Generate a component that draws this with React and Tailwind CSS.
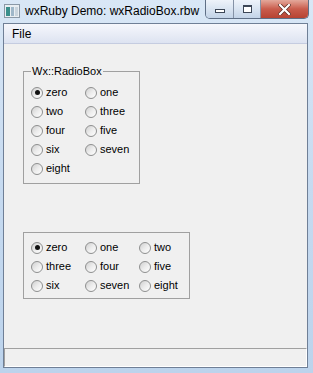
const Radio = ({ label, checked }) => {
  return (
    <div className="flex h-[19px] items-center">
      <span className="flex h-[12px] w-[12px] shrink-0 items-center justify-center rounded-full border border-[#8e8f8f] bg-gradient-to-br from-[#cfcfcf] via-[#ececec] to-[#ffffff]">
        {checked && <span className="h-[5px] w-[5px] rounded-full bg-[#111]" />}
      </span>
      <span className="ml-[3px] text-[11px] leading-none text-black">{label}</span>
    </div>
  );
};

const AppIcon = () => (
  <svg width="16" height="14" viewBox="0 0 16 14" className="shrink-0">
    <rect x="0.5" y="0.5" width="15" height="13" fill="#e9eef2" stroke="#8a98a6" />
    <rect x="2" y="3" width="4" height="9" fill="#3a8f8c" />
    <rect x="7" y="3" width="3" height="9" fill="#9fb7c9" />
    <rect x="11" y="3" width="3" height="9" fill="#c9d4dd" />
  </svg>
);

export default function App() {
  const first = ["zero", "one", "two", "three", "four", "five", "six", "seven", "eight"];

  return (
    <div className="flex h-[373px] w-[313px] flex-col overflow-hidden bg-gradient-to-b from-[#d9e7f6] via-[#c6daf0] to-[#bcd3ec] font-['Liberation_Sans',Arial,sans-serif]">
      {/* title bar */}
      <div className="flex h-[23px] shrink-0 items-start">
        <div className="ml-[4px] mt-[4px]">
          <AppIcon />
        </div>
        <span className="ml-[5px] mt-[4px] text-[12px] leading-[14px] text-black">
          wxRuby Demo: wxRadioBox.rbw
        </span>
        <div className="ml-auto mr-[4px] flex h-[19px] overflow-hidden rounded-b-[5px] border border-t-0 border-[#5f6f86]">
          <div className="flex w-[28px] items-end justify-center border-r border-[#8592a6] bg-gradient-to-b from-[#eef3fa] via-[#d9e4f1] to-[#c3d3e7] pb-[5px]">
            <span className="h-[4px] w-[10px] border border-[#3c4656] bg-white" />
          </div>
          <div className="flex w-[27px] items-center justify-center border-r border-[#8592a6] bg-gradient-to-b from-[#eef3fa] via-[#d9e4f1] to-[#c3d3e7]">
            <span className="h-[8px] w-[9px] border border-[#3c4656] border-t-[2px] bg-white" />
          </div>
          <div className="flex w-[47px] items-center justify-center bg-gradient-to-b from-[#e3a89b] via-[#c95c4c] to-[#b74332]">
            <svg width="13" height="11" viewBox="0 0 13 11">
              <path d="M2 1 L11 10 M11 1 L2 10" stroke="#5a2a20" strokeWidth="3.6" strokeLinecap="square" />
              <path d="M2 1 L11 10 M11 1 L2 10" stroke="#ffffff" strokeWidth="2.2" strokeLinecap="square" />
            </svg>
          </div>
        </div>
      </div>

      {/* client area */}
      <div className="mb-[5px] ml-[3px] mr-[5px] flex flex-1 flex-col border border-[#6f7f96] bg-[#f0f0f0]">
        <div className="flex h-[20px] shrink-0 items-center border-b border-[#c5cce0] bg-gradient-to-b from-[#f6f7fc] to-[#dde3f1] pl-[8px]">
          <span className="text-[12px] leading-none text-black">File</span>
        </div>

        <div className="flex flex-1 flex-col pl-[19px]">
          <fieldset className="mt-[21px] w-[113px] border border-[#a0a0a0] pb-[5px] pl-[7px] pt-[5px]">
            <legend className="px-[1px] text-[11px] leading-[13px] text-black">Wx::RadioBox</legend>
            <div className="grid grid-cols-[54px_54px]">
              {first.map((label, i) => (
                <Radio key={label} label={label} checked={i === 0} />
              ))}
            </div>
          </fieldset>

          <div className="mt-[48px] w-[167px] border border-[#a0a0a0] pb-[3px] pl-[7px] pt-[5px]">
            <div className="grid grid-cols-[54px_54px_54px]">
              {first.map((label, i) => (
                <Radio key={label} label={label} checked={i === 0} />
              ))}
            </div>
          </div>
        </div>

        <div className="h-[19px] shrink-0 border-b border-l border-r border-t border-b-white border-l-[#a0a0a0] border-r-white border-t-[#a0a0a0]" />
      </div>
    </div>
  );
}
